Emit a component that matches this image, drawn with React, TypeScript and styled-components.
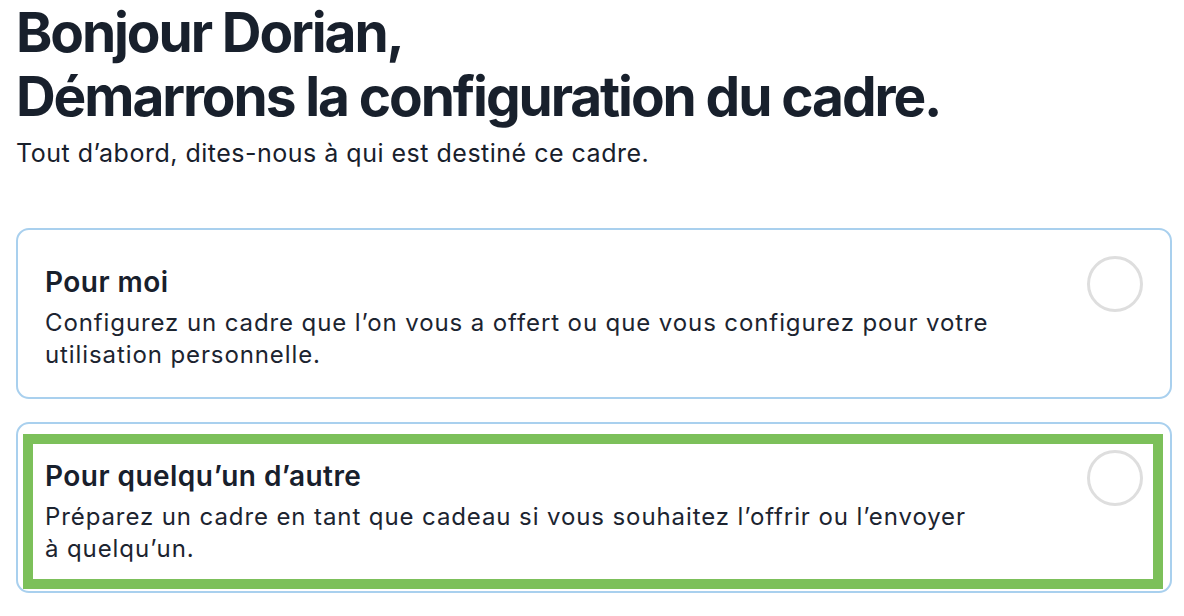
import React from "react";
import styled, { createGlobalStyle } from "styled-components";

const Global = createGlobalStyle`
  html, body { margin: 0; padding: 0; background: #ffffff; }
  body { font-family: Inter, "Noto Sans", Roboto, sans-serif; color: #18202c; -webkit-font-smoothing: antialiased; }
  * { box-sizing: border-box; }
`;

const Page = styled.main`
  width: 1184px;
  height: 616px;
  padding: 0 12px 0 16px;
  overflow: hidden;
  display: flex;
  flex-direction: column;
`;

const Heading = styled.h1`
  margin: 0;
  font-size: 55px;
  line-height: 64px;
  font-weight: 700;
  letter-spacing: -2.1px;
  color: #18202c;
`;

const Lead = styled.p`
  margin: 10px 0 0;
  font-size: 25px;
  line-height: 30px;
  font-weight: 400;
  letter-spacing: 0.5px;
  color: #18202c;
`;

const Options = styled.div`
  display: flex;
  flex-direction: column;
  gap: 23px;
  margin-top: 60px;
`;

const Card = styled.label`
  position: relative;
  display: flex;
  align-items: flex-start;
  justify-content: space-between;
  height: 171px;
  padding: 35px 27px 0 27px;
  border: 2px solid #a9d0ee;
  border-radius: 13px;
  background: #fff;
  cursor: pointer;
`;

const Texts = styled.div`
  width: 1000px;
  display: flex;
  flex-direction: column;
  gap: 8px;
`;

const Title = styled.div`
  font-size: 28px;
  line-height: 34px;
  font-weight: 600;
  letter-spacing: 0.45px;
  color: #18202c;
`;

const Desc = styled.div`
  font-size: 24px;
  line-height: 32px;
  font-weight: 400;
  letter-spacing: 0.9px;
  white-space: pre-line;
  color: #1c2430;
`;

const Radio = styled.span`
  flex: none;
  width: 56px;
  height: 56px;
  margin-top: -9px;
  border-radius: 50%;
  border: 3px solid #dedede;
  background: #fff;
`;

const Highlight = styled.span`
  position: absolute;
  left: 5px;
  top: 10px;
  right: 7px;
  bottom: 2px;
  border: 10px solid #7cc05a;
  pointer-events: none;
`;

type Option = { title: string; desc: string; highlighted?: boolean };

const options: Option[] = [
  {
    title: "Pour moi",
    desc: "Configurez un cadre que l’on vous a offert ou que vous configurez pour votre\nutilisation personnelle.",
  },
  {
    title: "Pour quelqu’un d’autre",
    desc: "Préparez un cadre en tant que cadeau si vous souhaitez l’offrir ou l’envoyer\nà quelqu’un.",
    highlighted: true,
  },
];

export default function App() {
  return (
    <>
      <Global />
      <Page>
        <Heading>
          Bonjour Dorian,
          <br />
          Démarrons la configuration du cadre.
        </Heading>
        <Lead>Tout d’abord, dites-nous à qui est destiné ce cadre.</Lead>
        <Options>
          {options.map((o) => (
            <Card key={o.title}>
              <Texts>
                <Title>{o.title}</Title>
                <Desc>{o.desc}</Desc>
              </Texts>
              <Radio />
              {o.highlighted && <Highlight />}
            </Card>
          ))}
        </Options>
      </Page>
    </>
  );
}
